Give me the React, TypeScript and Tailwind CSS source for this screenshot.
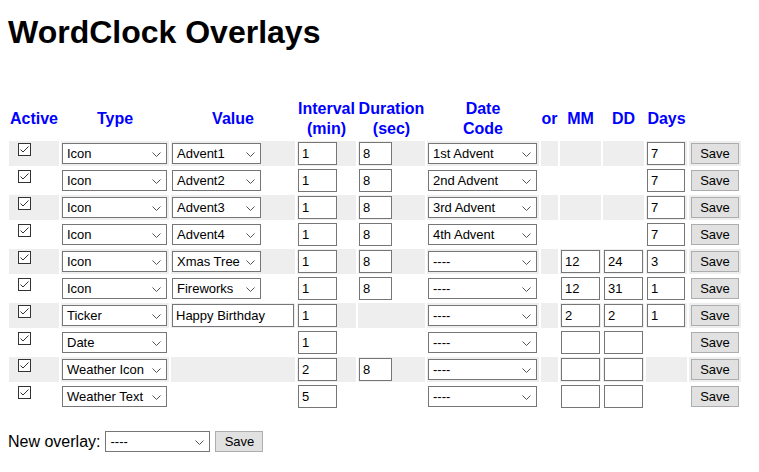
import type { ReactNode } from "react";

type Row = {
  type: string;
  value?: string;
  text?: string;
  interval: string;
  duration?: string;
  dateCode: string;
  mm?: string;
  dd?: string;
  days?: string;
};

const rows: Row[] = [
  { type: "Icon", value: "Advent1", interval: "1", duration: "8", dateCode: "1st Advent", days: "7" },
  { type: "Icon", value: "Advent2", interval: "1", duration: "8", dateCode: "2nd Advent", days: "7" },
  { type: "Icon", value: "Advent3", interval: "1", duration: "8", dateCode: "3rd Advent", days: "7" },
  { type: "Icon", value: "Advent4", interval: "1", duration: "8", dateCode: "4th Advent", days: "7" },
  { type: "Icon", value: "Xmas Tree", interval: "1", duration: "8", dateCode: "----", mm: "12", dd: "24", days: "3" },
  { type: "Icon", value: "Fireworks", interval: "1", duration: "8", dateCode: "----", mm: "12", dd: "31", days: "1" },
  { type: "Ticker", text: "Happy Birthday", interval: "1", dateCode: "----", mm: "2", dd: "2", days: "1" },
  { type: "Date", interval: "1", dateCode: "----", mm: "", dd: "" },
  { type: "Weather Icon", interval: "2", duration: "8", dateCode: "----", mm: "", dd: "" },
  { type: "Weather Text", interval: "5", dateCode: "----", mm: "", dd: "" },
];

function Chevron() {
  return (
    <svg width="9" height="5" viewBox="0 0 9 5" className="absolute right-[5px] top-[8px]">
      <polyline points="0.5,0.5 4.5,4.5 8.5,0.5" fill="none" stroke="#555" strokeWidth="1" />
    </svg>
  );
}

function Select({ value, className }: { value: string; className: string }) {
  return (
    <div
      className={
        "relative h-[21px] border border-[#767676] bg-white pl-[4px] text-left text-[13px] leading-[19px] text-black " +
        className
      }
    >
      {value}
      <Chevron />
    </div>
  );
}

function Field({ value, className }: { value: string; className: string }) {
  return (
    <input
      readOnly
      value={value}
      className={
        "block h-[23px] border border-[#767676] bg-white px-[3px] text-[13px] text-black outline-none " + className
      }
    />
  );
}

function SaveButton({ className = "" }: { className?: string }) {
  return (
    <button
      className={
        "block h-[21px] w-[48px] border border-[#adadad] bg-[#e1e1e1] text-[13px] leading-[19px] text-black " + className
      }
    >
      Save
    </button>
  );
}

function Checkbox() {
  return (
    <svg width="13" height="13" viewBox="0 0 13 13" className="ml-[8px] mt-px mb-[9px] block">
      <rect x="0.5" y="0.5" width="12" height="12" fill="#fff" stroke="#333" />
      <polyline points="2.5,6.5 5,9 10.5,3.5" fill="none" stroke="#333" strokeWidth="1" />
    </svg>
  );
}

function Cell({ shade, children, className = "" }: { shade: boolean; children?: ReactNode; className?: string }) {
  return (
    <td className={(shade ? "bg-[#eeeeee] " : "") + "h-[25px] p-[1px] align-middle leading-none " + className}>
      {children}
    </td>
  );
}

const headers: { label: ReactNode; cls: string }[] = [
  { label: "Active", cls: "w-[50px]" },
  { label: "Type", cls: "w-[108px]" },
  { label: "Value", cls: "w-[124px]" },
  { label: <>Interval<br />(min)</>, cls: "w-[59px]" },
  { label: <>Duration<br />(sec)</>, cls: "w-[67px]" },
  { label: <>Date<br />Code</>, cls: "w-[112px]" },
  { label: "or", cls: "w-[17px]" },
  { label: "MM", cls: "w-[41px]" },
  { label: "DD", cls: "w-[41px]" },
  { label: "Days", cls: "w-[41px]" },
  { label: "", cls: "w-[52px]" },
];

export default function App() {
  return (
    <div className="min-h-[472px] w-full bg-white pl-[7px] text-black" style={{ fontFamily: '"Liberation Sans", Arial, sans-serif' }}>
      <h1 className="pl-px pt-[14px] text-[32px] font-bold leading-[37px]">WordClock Overlays</h1>

      <table className="mt-[45px] w-[736px] table-fixed border-separate border-spacing-[2px]">
        <thead>
          <tr>
            {headers.map((h, i) => (
              <th
                key={i}
                className={"overflow-visible whitespace-nowrap px-0 py-[1px] text-center align-middle text-[16px] font-bold leading-[19.5px] text-[#0000ff] " + h.cls}
              >
                {h.label}
              </th>
            ))}
          </tr>
        </thead>
        <tbody>
          {rows.map((r, i) => {
            const shade = i % 2 === 0;
            return (
              <tr key={i}>
                <Cell shade={shade}>
                  <Checkbox />
                </Cell>
                <Cell shade={shade}>
                  <Select value={r.type} className="w-[105px]" />
                </Cell>
                <Cell shade={shade}>
                  {r.value && <Select value={r.value} className="w-[89px]" />}
                  {r.text && <Field value={r.text} className="w-[122px]" />}
                </Cell>
                <Cell shade={shade}>
                  <Field value={r.interval} className="w-[39px]" />
                </Cell>
                <Cell shade={shade}>{r.duration && <Field value={r.duration} className="w-[33px]" />}</Cell>
                <Cell shade={shade}>
                  <Select value={r.dateCode} className="w-[109px]" />
                </Cell>
                <Cell shade={shade} />
                <Cell shade={shade}>{r.mm !== undefined && <Field value={r.mm} className="w-[39px]" />}</Cell>
                <Cell shade={shade}>{r.dd !== undefined && <Field value={r.dd} className="w-[39px]" />}</Cell>
                <Cell shade={shade}>{r.days !== undefined && <Field value={r.days} className="w-[38px]" />}</Cell>
                <Cell shade={shade}>
                  <SaveButton className="ml-px" />
                </Cell>
              </tr>
            );
          })}
        </tbody>
      </table>

      <div className="mt-[20px] flex items-center pl-px">
        <span className="text-[16px] leading-[18px]">New overlay:</span>
        <Select value="----" className="ml-[5px] w-[105px]" />
        <SaveButton className="ml-[5px]" />
      </div>
    </div>
  );
}
